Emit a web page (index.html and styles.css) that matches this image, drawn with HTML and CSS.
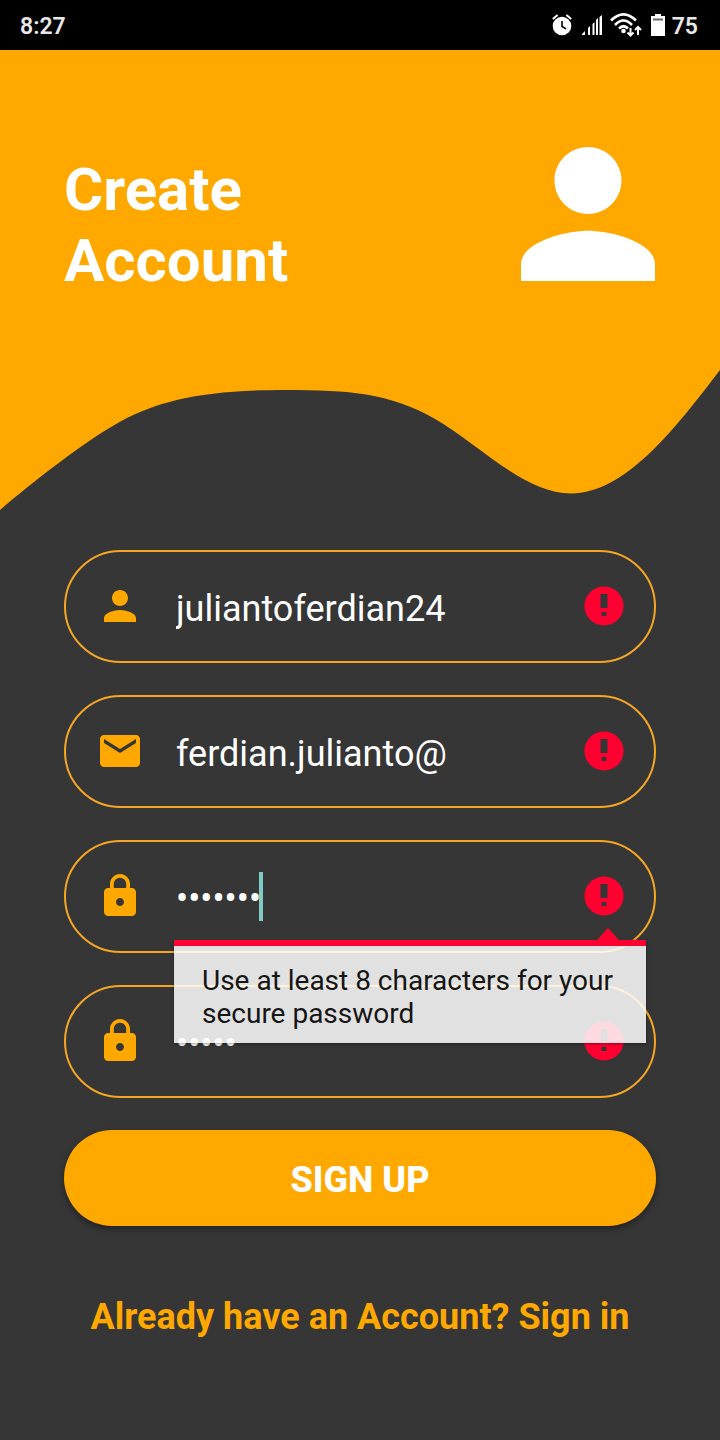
FILE: index.html
```html
<!DOCTYPE html>
<html lang="en">
<head>
<meta charset="utf-8">
<meta name="viewport" content="width=device-width, initial-scale=1">
<title>Create Account</title>
<link rel="stylesheet" href="styles.css">
</head>
<body>
<svg class="defs" aria-hidden="true">
  <symbol id="person" viewBox="0 0 24 24"><path d="M12 12c2.210 0 4-1.790 4-4s-1.790-4-4-4-4 1.790-4 4 1.790 4 4 4zm0 2c-2.670 0-8 1.340-8 4v2h16v-2c0-2.660-5.330-4-8-4z"/></symbol>
  <symbol id="mail" viewBox="0 0 24 24"><path d="M20 4H4c-1.100 0-1.990.9-1.990 2L2 18c0 1.100.9 2 2 2h16c1.100 0 2-.9 2-2V6c0-1.100-.9-2-2-2zm0 4l-8 5-8-5V6l8 5 8-5v2z"/></symbol>
  <symbol id="lock" viewBox="0 0 24 24"><path d="M18 8h-1V6c0-2.760-2.240-5-5-5S7 3.240 7 6v2H6c-1.100 0-2 .9-2 2v10c0 1.100.9 2 2 2h12c1.100 0 2-.9 2-2V10c0-1.100-.9-2-2-2zm-6 9c-1.100 0-2-.9-2-2s.9-2 2-2 2 .9 2 2-.9 2-2 2zm3.100-9H8.900V6c0-1.710 1.390-3.100 3.100-3.100 1.710 0 3.100 1.390 3.100 3.100v2z"/></symbol>
  <symbol id="alert" viewBox="0 0 40 40"><path fill-rule="evenodd" d="M20 .4a19.600 19.600 0 1 0 0 39.200a19.600 19.600 0 1 0 0-39.200zM16.500 8h7v14h-7zM17.500 26h5v4h-5z"/></symbol>
</svg>
<header class="status">
  <span>8:27</span>
  <div class="status-icons">
    <svg class="alarm" viewBox="0 0 20 22" aria-hidden="true"><circle cx="10" cy="12" r="9.300" fill="#fff"/><path d="M.8 5L5.600 1M19.200 5L14.400 1" stroke="#fff" stroke-width="2"/><path d="M10 7v5.500l4 2.400" fill="none" stroke="#000" stroke-width="1.600"/></svg>
    <svg class="signal" viewBox="0 0 20 20" fill="#fff" aria-hidden="true"><path d="M0 20v-1l3-3v4zM6 13l2-2v9H6zM10.500 9l2-2v13h-2zM14 5l2-2v17h-2zM17.500 2L20 0v20h-2.500z"/></svg>
    <svg class="wifi" viewBox="0 0 32 26" aria-hidden="true"><g fill="none" stroke="#fff" stroke-width="2.600"><path d="M1 8.500Q13.500-4 26 8.500M5 13Q13.500 4 22 13M9 16.500Q13.500 12 18 16.500"/></g><circle cx="13.500" cy="19" r="2.300" fill="#fff"/><path d="M20.500 16v7M17.500 20.500l3 3 3-3M28 23v-8M25 18l3-3 3 3" fill="none" stroke="#fff" stroke-width="2"/></svg>
    <svg class="battery" viewBox="0 0 14 22" aria-hidden="true"><path d="M4 0h6v2h4v20H0V2h4z" fill="#fff"/><path d="M2 5.500h10" stroke="#666" stroke-width="2"/></svg>
    <span>75</span>
  </div>
</header>
<section class="hero">
  <div class="hero-content">
    <h1>Create<br>Account</h1>
    <svg class="avatar" viewBox="4 4 16 16" aria-hidden="true"><use href="#person" width="24" height="24"/></svg>
  </div>
  <svg class="wave" viewBox="0 370 720 140" preserveAspectRatio="none" aria-hidden="true"><path d="M0 370V510C30 484 85 441 120 421.700C160 400 205 390 285 390C350 390 390 393 436 419.500C478 444 525 493.500 571 493.500C625 493.500 675 429 720 370z"/></svg>
</section>
<main>
  <form>
    <div class="field">
      <svg class="icon" aria-hidden="true"><use href="#person"/></svg>
      <input type="text" aria-label="Username" value="juliantoferdian24">
      <svg class="alert" aria-hidden="true"><use href="#alert"/></svg>
    </div>
    <div class="field">
      <svg class="icon" aria-hidden="true"><use href="#mail"/></svg>
      <input type="text" inputmode="email" aria-label="Email" value="ferdian.julianto@">
      <svg class="alert" aria-hidden="true"><use href="#alert"/></svg>
    </div>
    <div class="field active">
      <svg class="icon" aria-hidden="true"><use href="#lock"/></svg>
      <input type="password" aria-label="Password" aria-describedby="hint" value="secret1">
      <span class="caret"></span>
      <svg class="alert" aria-hidden="true"><use href="#alert"/></svg>
      <p class="tooltip" id="hint" role="alert">Use at least 8 characters for your secure password</p>
    </div>
    <div class="field">
      <svg class="icon" aria-hidden="true"><use href="#lock"/></svg>
      <input type="password" aria-label="Confirm password" value="secre">
      <svg class="alert" aria-hidden="true"><use href="#alert"/></svg>
    </div>
    <button type="button">SIGN UP</button>
  </form>
  <a class="signin" href="#signin">Already have an Account? Sign in</a>
</main>
</body>
</html>
```
FILE: styles.css
```css
* { box-sizing: border-box; }
body {
  margin: 0;
  min-height: 100vh;
  background: #363636;
  color: #fff;
  font-family: Roboto, sans-serif;
}
.defs { position: absolute; width: 0; height: 0; }
svg { display: block; flex: none; }

.status {
  display: flex;
  justify-content: space-between;
  align-items: center;
  height: 50px;
  padding: 2px 22px 0 20px;
  background: #000;
  color: #e8e8e8;
  font-size: 23px;
  font-weight: 600;
}
.status-icons { display: flex; align-items: center; }
.status-icons svg { margin-bottom: 2px; }
.status-icons .alarm { width: 20px; height: 22px; margin-right: 10px; }
.status-icons .signal { width: 20px; height: 20px; margin-right: 8px; }
.status-icons .wifi { width: 32px; height: 26px; margin-right: 9px; }
.status-icons .battery { width: 14px; height: 22px; margin-right: 7px; }

.hero-content {
  display: flex;
  justify-content: space-between;
  align-items: flex-start;
  padding: 97px 65px 89px 64px;
  background: #ffa800;
}
h1 {
  margin: 0;
  padding-top: 7px;
  font-size: 60px;
  line-height: 71px;
  font-weight: 700;
  height: 134px;
}
.avatar { width: 134px; height: 134px; fill: #fff; }
.wave { width: 100%; height: 140px; fill: #ffa800; }

main { padding: 40px 64px; }
form { display: flex; flex-direction: column; gap: 32px; }
.field {
  position: relative;
  display: flex;
  align-items: center;
  height: 113px;
  padding: 0 30px 2px;
  border: 2px solid #f5a623;
  border-radius: 57px;
}
.active { z-index: 1; }
.icon { width: 48px; height: 48px; fill: #ffa800; }
.alert { width: 40px; height: 40px; fill: #ff0030; }
input {
  flex: 1;
  min-width: 0;
  margin-left: 32px;
  padding: 6px 0 0;
  border: 0;
  outline: 0;
  background: none;
  color: #fff;
  font: 36px/48px Roboto, sans-serif;
}
.caret {
  position: absolute;
  left: 193px;
  top: 30px;
  width: 4px;
  height: 49px;
  background: #80cbc4;
}
.tooltip {
  position: absolute;
  top: 98px;
  left: 108px;
  right: 8px;
  margin: 0;
  padding: 24px 28px 13px;
  background: linear-gradient(#ff0030 6px, rgba(255, 255, 255, .85) 6px);
  box-shadow: 0 1px 3px rgba(0, 0, 0, .4);
  color: #151515;
  font-size: 28px;
  line-height: 33px;
}
.tooltip::before {
  content: "";
  position: absolute;
  right: 27px;
  bottom: 100%;
  border: 11px solid transparent;
  border-top: 0;
  border-bottom: 12px solid #ff0030;
}
button {
  height: 96px;
  padding: 4px 0 0;
  border: 0;
  border-radius: 48px;
  background: #ffa800;
  box-shadow: 0 3px 6px rgba(0, 0, 0, .4);
  color: #fff;
  font: 800 36px Roboto, sans-serif;
}
.signin {
  display: block;
  margin-top: 70px;
  color: #ffa800;
  font-size: 36px;
  line-height: 42px;
  font-weight: 700;
  text-align: center;
  text-decoration: none;
}
@media (max-width: 719px) {
  .signin { font-size: 28px; }
}
```
